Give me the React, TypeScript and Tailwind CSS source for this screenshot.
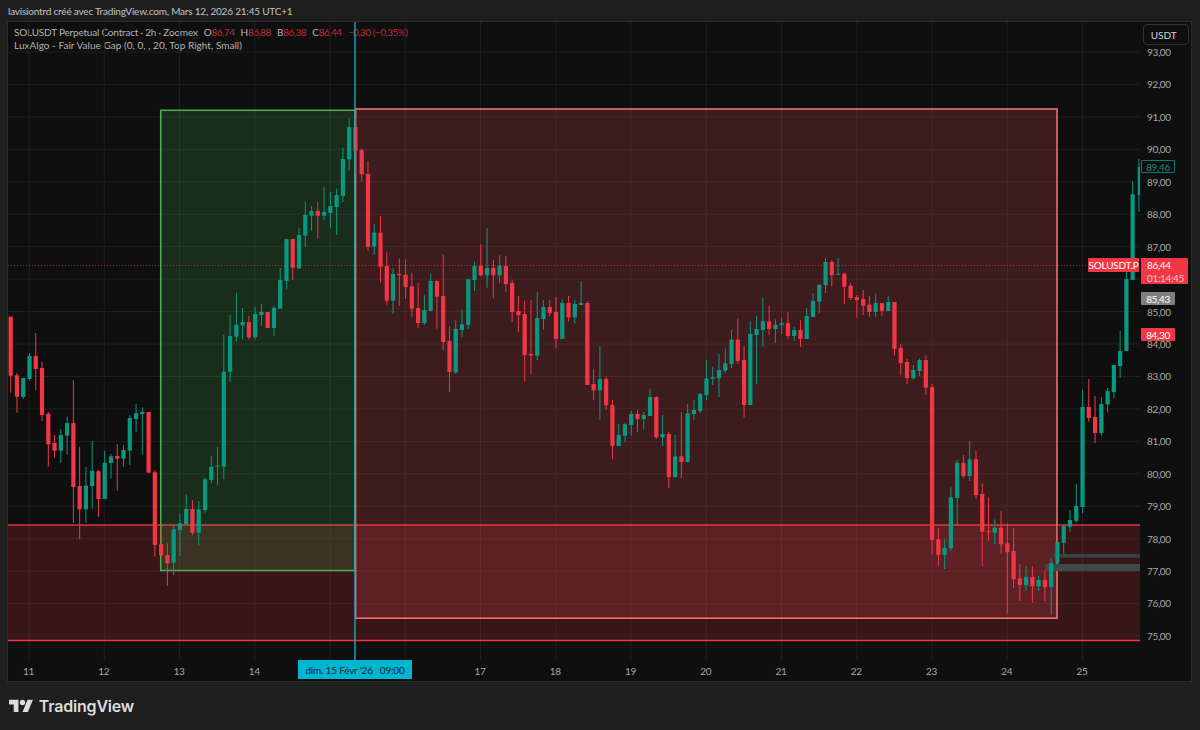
import React from 'react';

const UP = '#089981';
const DOWN = '#f23645';

// [wick top, body top, body bottom, wick bottom, up?] in page pixels, one per 2h bar
const candles: [number, number, number, number, number][] = [
  [316.7, 316.7, 375.7, 392.7, 0], [373, 375.3, 396.7, 412.7, 0], [377.7, 378, 397, 399, 1], [353, 356, 379, 380.7, 1],
  [333, 356, 369, 390, 0], [361.7, 368, 415, 421, 0], [412, 413.7, 444.3, 466.7, 0], [435, 443, 450.7, 457.7, 0],
  [429, 435, 450.7, 462.7, 1], [416.7, 423, 435.7, 454.7, 1], [380, 423, 487, 523, 0], [446.7, 486, 509.3, 539.3, 0],
  [467, 485.7, 509.3, 523, 1], [441, 471, 486, 508.7, 1], [470, 471.3, 499, 516.7, 0], [450.7, 462.7, 499, 499, 1],
  [454, 456.3, 463, 478.3, 1], [444.3, 456, 458.7, 490.7, 0], [445, 450, 458.7, 466.7, 1], [415.3, 418, 450.7, 465, 1],
  [404, 413.3, 419, 432.3, 1], [407.3, 412, 414, 454.7, 1], [412, 412, 472.7, 472.7, 0], [470, 472.3, 545, 556.7, 0],
  [525, 544.3, 555.3, 558, 0], [543.3, 555, 563.3, 586, 0], [526, 529.3, 562.7, 575, 1], [514, 523.3, 530, 556, 1],
  [494.3, 509, 524, 524, 1], [500, 509, 532.7, 535, 0], [501, 509.3, 532.7, 545.7, 1], [477.3, 479.3, 510, 512.7, 1],
  [455.7, 466.7, 480, 483.3, 1], [447, 465.7, 466.7, 485.3, 1], [335, 371.7, 466.7, 479.3, 1], [315, 336, 371.7, 381.7, 1],
  [292.7, 324.7, 336.7, 341.7, 1], [308, 322, 325.3, 339.3, 1], [316, 322, 337.3, 339.3, 0], [307, 314, 337.3, 339.3, 1],
  [304, 312, 315, 326, 1], [312, 312, 328, 328, 0], [306, 308, 328, 335.7, 1], [268, 280, 308.7, 308.7, 1],
  [239, 239, 281, 289.3, 1], [239, 239, 267.7, 280, 0], [228, 235, 268.3, 269, 1], [201.7, 215, 235.7, 246.7, 1],
  [206, 211, 215.7, 230.7, 1], [202, 211, 215.7, 238.7, 0], [187.3, 212, 215.7, 220, 1], [192, 206, 213, 227.7, 1],
  [188.7, 195, 207, 235, 1], [147.7, 159, 196, 202, 1], [118.3, 127, 159.3, 170.7, 1], [118, 127, 150.7, 173.3, 0],
  [148.3, 150, 174.3, 181.7, 0], [161, 174, 246.7, 250.7, 0], [224.3, 232.7, 246.7, 254.7, 1], [216, 232.7, 266.7, 282.3, 0],
  [252.3, 266, 300.7, 304.7, 0], [268.3, 274, 300.7, 314, 1], [258.7, 274, 275, 306, 0], [259.3, 274.7, 287, 299, 0],
  [273, 286.3, 308.7, 316.7, 0], [283, 308, 323, 327.7, 0], [295.3, 310, 323, 325, 1], [273.7, 281, 311, 311, 1],
  [280.3, 281, 296.7, 328.7, 0], [254.7, 296, 342, 350, 0], [326.3, 341, 372, 392, 0], [320.3, 329, 372.3, 373.7, 1],
  [309.3, 324.3, 330, 337.3, 1], [278.7, 279.3, 325, 329, 1], [261.3, 266, 280, 291, 1], [244.3, 265.7, 275.3, 276, 0],
  [228, 268, 275.3, 287.7, 1], [260, 268, 275.3, 298.3, 0], [255.3, 265.7, 275.3, 283.3, 1], [256.3, 266, 284, 292, 0],
  [280.3, 283, 312, 322, 0], [296, 311, 315, 332.3, 0], [300.7, 314, 355, 381.7, 0], [300, 354, 355.7, 374, 0],
  [292, 318, 355.7, 360, 1], [300, 307, 319, 329.3, 1], [300, 307, 313, 316, 0], [297, 312, 339, 348.3, 0],
  [299.3, 303, 339, 339, 1], [296, 303, 317.3, 321.3, 0], [300, 304, 317.3, 323.7, 1], [281, 303, 305, 305, 1],
  [301, 303, 385, 385, 0], [369.3, 384, 390.3, 400, 0], [346, 379, 390.3, 420, 1], [376.7, 379, 405.3, 410, 0],
  [400, 405, 446, 459.3, 0], [424, 435, 446, 446, 1], [423.3, 424.3, 435.7, 442, 1], [411, 414, 425, 435.7, 1],
  [410.3, 414, 419, 432, 0], [412, 415, 419, 429.3, 1], [388.7, 397, 416, 416, 1], [396.3, 397, 437.3, 439, 0],
  [415, 434, 437.3, 446, 1], [432, 434, 477, 488, 0], [435, 456.3, 477, 478, 1], [412, 456.3, 462, 478, 0],
  [404, 413.3, 462, 462, 1], [400, 410, 414, 420, 1], [393, 394, 411, 413.3, 1], [360, 378.3, 395, 400, 1],
  [366.7, 377.3, 378.7, 385, 1], [354, 370, 378.3, 397, 1], [348.3, 363.3, 370.7, 373, 1], [330, 339.7, 364, 368, 1],
  [318, 339.7, 361, 364, 0], [346, 360, 405, 417.3, 0], [321.3, 334, 405, 405, 1], [315.7, 329, 335, 384, 1],
  [297.7, 321.3, 330, 347, 1], [306, 321.3, 329, 335, 0], [319.3, 324.7, 329, 343, 1], [317.3, 323.3, 325, 334, 1],
  [312.3, 323, 336, 339, 0], [327, 330, 336, 341, 1], [320.3, 330, 339, 347, 0], [308, 316, 339, 339, 1],
  [293, 301, 317, 317, 1], [284, 285, 301.7, 313.3, 1], [258, 262, 285.3, 293, 1], [260, 262, 275.3, 286.3, 0],
  [258, 273.7, 274.7, 274.7, 1], [272.7, 273.7, 286.7, 304, 0], [283.3, 285.7, 298, 300, 0], [295, 297, 300, 318, 0],
  [290, 299, 305.7, 315, 0], [296, 304.7, 312, 316.7, 0], [293.7, 303, 312, 316.7, 1], [303, 303, 311, 316, 0],
  [296, 302, 311, 311, 1], [302, 302, 349, 355.3, 0], [344.3, 348, 363, 375.3, 0], [359, 362, 378, 384, 0],
  [365, 370, 378.3, 379.3, 1], [358.3, 360, 371, 376, 1], [355.3, 360, 387.7, 395, 0], [384, 387, 540, 555, 0],
  [528, 539.3, 555, 565.7, 0], [539.3, 547.7, 555, 569, 1], [487.3, 497.3, 548.3, 551, 1], [460, 462.7, 498, 525, 1],
  [455, 462.7, 476, 478, 0], [441, 459.3, 476, 481, 1], [451, 459.3, 495, 499, 0], [483.3, 494, 531.7, 566, 0],
  [497.3, 531.3, 532.3, 541, 0], [519.3, 527.7, 532.7, 544, 1], [511, 527.7, 544.3, 554, 0], [523.3, 543.3, 552.3, 613.3, 0],
  [528, 551, 579.3, 588, 0], [564, 578.3, 585, 601, 0], [566, 577, 585.3, 591, 1], [566, 577, 586.3, 603, 0],
  [576, 580, 586.3, 591, 1], [571, 580, 587, 601.3, 0], [558, 562.7, 587, 615, 1], [525, 542, 563.3, 563.3, 1],
  [524, 526, 542.7, 554, 1], [510, 520, 526.7, 532, 1], [484, 506, 520.7, 523, 1], [390, 407, 507, 513, 1],
  [379, 407, 418, 422, 0], [396, 417, 433, 443, 0], [397, 404, 433, 436, 1], [388, 391, 404.3, 412.3, 1],
  [365, 365, 392, 398, 1], [331, 351, 366, 378, 1], [270, 279, 351, 351, 1], [181, 194.3, 280, 280, 1],
  [159, 166.7, 195, 211.7, 1],
];

const barX = (i: number) => 10.7 + i * 6.268;

// 86,00 sits behind the last-price tag, so its row stays empty
const prices = ['93,00', '92,00', '91,00', '90,00', '89,00', '88,00', '87,00', '', '85,00', '84,00', '83,00', '82,00', '81,00', '80,00', '79,00', '78,00', '77,00', '76,00', '75,00'];
const gridY = prices.map((_, i) => 52 + i * 32.45);
const days = ['11', '12', '13', '14', '', '', '17', '18', '19', '20', '21', '22', '23', '24', '25'];
const gridX = days.map((_, i) => 29 + i * 75.25);

function Chart() {
  return (
    <svg className="block relative z-10" width={1132} height={638} viewBox="8 22 1132 638">
      {gridY.map((y) => (
        <line key={y} x1={8} x2={1140} y1={y} y2={y} stroke="#1f1f1f" />
      ))}
      {gridX.map((x) => (
        <line key={x} x1={x} x2={x} y1={22} y2={660} stroke="#1f1f1f" />
      ))}

      {/* fair value gap zone */}
      <rect x={8} y={525} width={1132} height={115} fill="#f23645" fillOpacity={0.18} />
      <line x1={8} x2={1140} y1={525} y2={525} stroke="#f23645" strokeOpacity={0.9} strokeWidth={1.5} />
      <line x1={8} x2={1140} y1={640.5} y2={640.5} stroke="#f23645" strokeWidth={1.5} />

      {/* drawn boxes */}
      <rect x={160.7} y={110.3} width={194.3} height={460.2} fill="#4caf50" fillOpacity={0.18} stroke="#4caf50" strokeWidth={1.5} />
      <rect x={355.6} y={109} width={701.4} height={509.2} fill="#f4515c" fillOpacity={0.2} stroke="#f7797f" strokeWidth={1.5} />

      {/* order blocks on the right */}
      <path d="M1052 557.7V555.5a1.5 1.5 0 0 1 1.5-1.5H1140V557.7Z" fill="#33433f" />
      <path d="M1045 571V566a2 2 0 0 1 2-2H1140V571Z" fill="#3c4b48" />

      <line x1={8} x2={1089} y1={265.5} y2={265.5} stroke="#f23645" strokeOpacity={0.65} strokeDasharray="1 2" />

      {candles.map(([wt, bt, bb, wb, up], i) => {
        const x = barX(i);
        const color = up ? UP : DOWN;
        const last = i === candles.length - 1;
        const w = last ? 2.4 : 4.2;
        return (
          <g key={i} fill={color}>
            <rect x={x - 0.5} y={wt} width={1} height={wb - wt} />
            <rect x={x - w / 2} y={bt} width={w} height={Math.max(bb - bt, 1)} />
          </g>
        );
      })}

      <line x1={355} x2={355} y1={22} y2={660} stroke="#1ea5c2" strokeWidth={1.4} />
    </svg>
  );
}

function PriceTag({ className, children }: { className: string; children: React.ReactNode }) {
  return (
    <div className={`absolute left-[1px] w-[34px] h-[13px] flex items-center justify-center rounded-[1px] ${className}`}>
      {children}
    </div>
  );
}

export default function App() {
  return (
    <div className="w-[1200px] h-[730px] bg-[#1e1e1e] flex flex-col overflow-hidden font-['Lato','Liberation_Sans',sans-serif] text-[10px] tracking-[-0.2px] leading-none text-[#b4b4b4]">
      <div className="h-[21px] pl-[8px] pt-[1px] flex items-center text-[#c2c2c2]">
        lavisiontrd créé avec TradingView.com, Mars 12, 2026 21:45 UTC+1
      </div>

      <div className="relative ml-[7px] w-[1185px] h-[661px] border border-[#2b2b2b] bg-[#0f0f0f] flex">
        <div className="w-[1132px] flex flex-col">
          <Chart />
          <div className="h-[21px] flex -ml-[17px] text-[#a8a8a8]">
            {days.map((d, i) => (
              <div key={i} className="w-[75.25px] shrink-0 text-center pt-[6px]">
                {d}
              </div>
            ))}
          </div>
        </div>

        <div className="relative flex-1 pl-[7px] pt-[13.8px] text-[#a8a8a8] tracking-[-0.35px]">
          {prices.map((p, i) => (
            <div key={i} className="h-[32.45px] flex items-center">
              {p}
            </div>
          ))}

          <div className="absolute left-[2.7px] top-[2px] w-[46px] h-[21px] border border-[#333333] rounded-[4px] bg-[#0f0f0f] flex items-center pl-[7px] text-[#d4d4d4] tracking-normal">
            USDT
          </div>

          <PriceTag className="top-[138px] bg-[#0f0f0f] border border-[#0a7c69] text-[#0d8d77]">89,46</PriceTag>
          <div className="absolute left-[1px] top-[236px] w-[47px] h-[26px] bg-[#f23645] rounded-[1px] flex flex-col justify-center gap-[3px] pl-[6px] text-white">
            <span>86,44</span>
            <span className="text-[#f7c6ca]">01:14:45</span>
          </div>
          <PriceTag className="top-[270px] bg-[#808080] text-white">85,43</PriceTag>
          <PriceTag className="top-[306px] bg-[#f23645] text-white">84,30</PriceTag>
        </div>

        {/* chart legend */}
        <div className="absolute left-[6px] top-[5px] flex flex-col gap-[3px]">
          <div className="h-[10px] flex items-center whitespace-pre">
            <span>SOLUSDT Perpetual Contract · 2h · Zoomex</span>
            <span className="ml-[6px]">O</span>
            <span className="text-[#bd2a36] tracking-[-0.5px]">86,74</span>
            <span className="ml-[6px]">H</span>
            <span className="text-[#bd2a36] tracking-[-0.5px]">86,88</span>
            <span className="ml-[6px]">B</span>
            <span className="text-[#bd2a36] tracking-[-0.5px]">86,38</span>
            <span className="ml-[6px]">C</span>
            <span className="text-[#bd2a36] tracking-[-0.5px]">86,44</span>
            <span className="ml-[6px] text-[#bd2a36] tracking-[-0.5px]">−0,30 (−0,35%)</span>
          </div>
          <div className="h-[10px] flex items-center tracking-[0.03px]">LuxAlgo - Fair Value Gap (0, 0, , 20, Top Right, Small)</div>
        </div>

        {/* crosshair time label */}
        <div className="absolute z-20 left-[290px] top-[638px] w-[114px] h-[19px] bg-[#00b5d0] flex items-center justify-center whitespace-pre text-[#0c2b33]">
          dim. 15 Févr '26   09:00
        </div>
        <div className="absolute z-20 left-[1080px] top-[236px] w-[51px] h-[14px] bg-[#f23645] rounded-[1px] flex items-center justify-center text-white">
          SOLUSDT.P
        </div>
      </div>

      <div className="flex-1 flex items-center pl-[9px] gap-[5.5px]">
        <svg width={24.3} height={19} viewBox="0 0 36 28" fill="#dcdcdc">
          <path d="M14 22H7V11H0V4h14v18zM28 22h-8l7.5-18h8L28 22z" />
          <circle cx={20} cy={8} r={4} />
        </svg>
        <span className="font-['Inter',sans-serif] font-semibold text-[16px] text-[#dcdcdc] tracking-[-0.2px]">TradingView</span>
      </div>
    </div>
  );
}
